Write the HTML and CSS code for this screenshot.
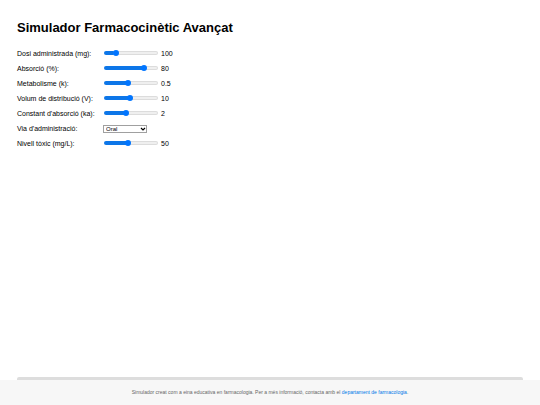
FILE: index.html
```html
<!DOCTYPE html>
<html lang="ca">
<head>
<meta charset="utf-8">
<meta name="viewport" content="width=device-width, initial-scale=1">
<title>Simulador Farmacocinètic Avançat</title>
<link rel="stylesheet" href="styles.css">
</head>
<body>
<main>
  <h1>Simulador Farmacocinètic Avançat</h1>
  <form class="controls">
    <div class="row">
      <label for="dose">Dosi administrada (mg):</label>
      <input type="range" id="dose" min="10" max="500" value="100" style="--fill: 18%">
      <output for="dose">100</output>
    </div>
    <div class="row">
      <label for="absorption">Absorció (%):</label>
      <input type="range" id="absorption" min="10" max="100" value="80" style="--fill: 78%">
      <output for="absorption">80</output>
    </div>
    <div class="row">
      <label for="metabolism">Metabolisme (k):</label>
      <input type="range" id="metabolism" min="0.1" max="1" step="0.1" value="0.5" style="--fill: 44%">
      <output for="metabolism">0.5</output>
    </div>
    <div class="row">
      <label for="volume">Volum de distribució (V):</label>
      <input type="range" id="volume" min="1" max="20" value="10" style="--fill: 47%">
      <output for="volume">10</output>
    </div>
    <div class="row">
      <label for="ka">Constant d'absorció (ka):</label>
      <input type="range" id="ka" min="0.1" max="5" step="0.1" value="2" style="--fill: 39%">
      <output for="ka">2</output>
    </div>
    <div class="row">
      <label for="route">Via d'administració:</label>
      <div class="select">
        <select id="route">
          <option>Oral</option>
        </select>
        <svg viewBox="0 0 6 4" aria-hidden="true"><path d="M1 1l2 2 2-2"/></svg>
      </div>
    </div>
    <div class="row">
      <label for="toxic">Nivell tòxic (mg/L):</label>
      <input type="range" id="toxic" min="10" max="100" value="50" style="--fill: 44%">
      <output for="toxic">50</output>
    </div>
  </form>
  <div class="chart-edge"></div>
</main>
<footer>
  <p>Simulador creat com a eina educativa en farmacologia. Per a més informació, contacta amb el <a href="#">departament de farmacologia</a>.</p>
</footer>
</body>
</html>
```

FILE: styles.css
```css
* {
  box-sizing: border-box;
}

body {
  margin: 0;
  min-height: 100vh;
  display: flex;
  flex-direction: column;
  background: #fff;
  color: #000;
  font-family: "Liberation Sans", Arial, sans-serif;
  font-size: 7px;
}

main {
  flex: 1;
  display: flex;
  flex-direction: column;
  padding: 20px 17px 0;
}

h1 {
  margin: 0 0 10px;
  font-size: 13px;
  line-height: 16px;
}

.controls {
  display: flex;
  flex-direction: column;
}

.row {
  display: grid;
  grid-template-columns: 87px 54px auto;
  align-items: center;
  height: 15px;
}

.row label,
.row output {
  line-height: 15px;
}

.row output {
  padding-left: 3px;
}

input[type="range"] {
  appearance: none;
  width: 100%;
  height: 6px;
  margin: 0 0 2px;
  background: none;
}

input[type="range"]::-webkit-slider-runnable-track {
  height: 4px;
  border: 1px solid transparent;
  border-radius: 2px;
  background:
    linear-gradient(#0d76e8, #0d76e8) 0 0 / var(--fill) 100% no-repeat border-box,
    linear-gradient(#efefef, #efefef) padding-box,
    linear-gradient(#dcdcdc, #dcdcdc) border-box;
}

input[type="range"]::-webkit-slider-thumb {
  appearance: none;
  width: 6px;
  height: 6px;
  margin-top: -2px;
  border-radius: 50%;
  background: #0075ff;
}

.select {
  position: relative;
  grid-column: 2 / -1;
  justify-self: start;
  display: flex;
  width: 44px;
  margin-left: -1px;
}

select {
  appearance: none;
  width: 100%;
  height: 8px;
  margin: 0;
  padding: 0 2px;
  border: 1px solid #a0a0a0;
  border-radius: 0;
  background: #fff;
  color: #000;
  font: 6px/6px "Liberation Sans", Arial, sans-serif;
}

.select svg {
  position: absolute;
  top: 2px;
  right: 1px;
  width: 6px;
  height: 4px;
  fill: none;
  stroke: #000;
  stroke-width: 1.2;
  pointer-events: none;
}

.chart-edge {
  height: 3px;
  margin-top: auto;
  border-radius: 2px 2px 0 0;
  background: #ddd;
}

footer {
  padding: 8px 17px;
  background: #f7f7f7;
  color: #666;
  text-align: center;
}

footer p {
  margin: 0;
  font-size: 5px;
  line-height: 9px;
}

footer a {
  color: #0078e7;
  text-decoration: none;
}
```
